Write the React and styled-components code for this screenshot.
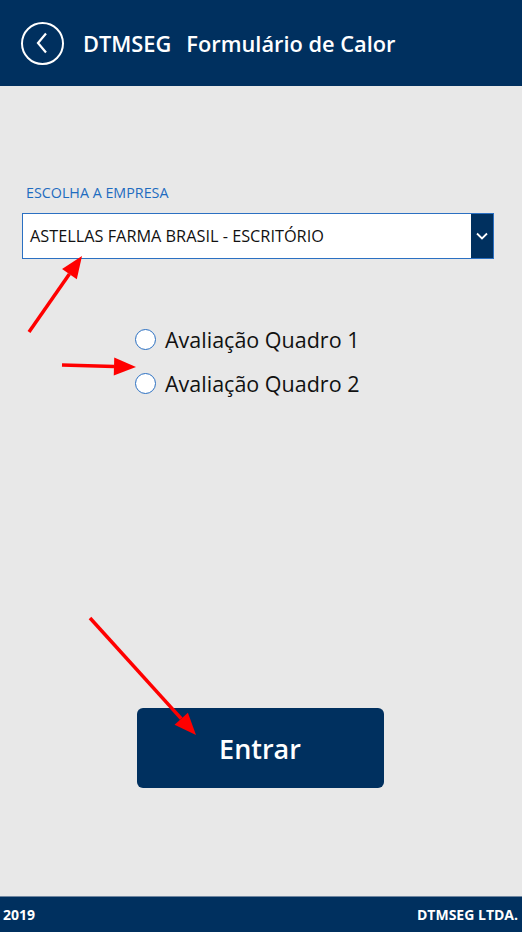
import React from 'react';
import styled, { createGlobalStyle } from 'styled-components';

const Global = createGlobalStyle`
  html, body, #root {
    margin: 0;
    padding: 0;
    height: 100%;
  }
  body {
    font-family: 'Open Sans', 'Noto Sans', sans-serif;
    background: #e8e8e8;
  }
`;

const Page = styled.div`
  position: relative;
  display: flex;
  flex-direction: column;
  min-height: 932px;
  background: #e8e8e8;
`;

const Header = styled.header`
  display: flex;
  align-items: center;
  height: 86px;
  padding-left: 21px;
  background: #00305f;
  color: #fff;
  box-sizing: border-box;
`;

const BackButton = styled.div`
  width: 43px;
  height: 43px;
  border: 2px solid #fff;
  border-radius: 50%;
  box-sizing: border-box;
  display: flex;
  align-items: center;
  justify-content: center;
  margin-right: 19px;
`;

const Title = styled.h1`
  display: flex;
  gap: 15px;
  margin: 0;
  font-size: 21.8px;
  font-weight: 600;
`;

const Main = styled.main`
  flex: 1;
  display: flex;
  flex-direction: column;
  padding: 99px 28px 0 22px;
`;

const Label = styled.div`
  font-size: 14.3px;
  line-height: 16px;
  color: #1e6cc0;
  padding-left: 4px;
  margin-bottom: 12px;
`;

const Select = styled.div`
  display: flex;
  height: 46px;
  border: 1px solid #2b70c2;
  background: #fff;
  box-sizing: border-box;
`;

const SelectValue = styled.div`
  flex: 1;
  display: flex;
  align-items: center;
  padding-left: 7px;
  font-size: 16.3px;
  color: #111;
`;

const SelectButton = styled.div`
  width: 22px;
  background: #00305f;
  display: flex;
  align-items: center;
  justify-content: center;
`;

const RadioGroup = styled.div`
  display: flex;
  flex-direction: column;
  margin: 58px 0 0 113px;
`;

const RadioRow = styled.label`
  display: flex;
  align-items: center;
  height: 44px;
  font-size: 21.5px;
  color: #111;
`;

const RadioDot = styled.span`
  width: 21px;
  height: 21px;
  border: 1.5px solid #2b70c2;
  border-radius: 50%;
  background: #fff;
  box-sizing: border-box;
  margin-right: 9px;
`;

const Button = styled.button`
  align-self: center;
  width: 247px;
  height: 80px;
  margin: 303px 0 0 4px;
  border: none;
  border-radius: 6px;
  background: #00305f;
  color: #fff;
  font-family: inherit;
  font-size: 27px;
  font-weight: 600;
`;

const Footer = styled.footer`
  display: flex;
  justify-content: space-between;
  align-items: center;
  height: 35px;
  margin-top: auto;
  padding: 0 4px 0 3px;
  background: #00305f;
  color: #fff;
  font-size: 14px;
  font-weight: 700;
  border-top: 1px solid #6f86a0;
`;

const Annotations = styled.svg`
  position: absolute;
  left: 0;
  top: 0;
  width: 522px;
  height: 932px;
  pointer-events: none;
`;

const Arrow = ({ x1, y1, x2, y2 }) => {
  const a = Math.atan2(y2 - y1, x2 - x1);
  const len = 22;
  const w = 9;
  const bx = x2 - len * Math.cos(a);
  const by = y2 - len * Math.sin(a);
  const px = -Math.sin(a) * w;
  const py = Math.cos(a) * w;
  return (
    <g>
      <line x1={x1} y1={y1} x2={bx} y2={by} stroke="#ff0000" strokeWidth="3.5" />
      <polygon
        points={`${x2},${y2} ${bx + px},${by + py} ${bx - px},${by - py}`}
        fill="#ff0000"
      />
    </g>
  );
};

export default function App() {
  return (
    <Page>
      <Global />
      <Header>
        <BackButton>
          <svg width="20" height="24" viewBox="0 0 20 24">
            <path d="M13 2.5 L5 12 L13 21.5" fill="none" stroke="#fff" strokeWidth="2.2" />
          </svg>
        </BackButton>
        <Title>
          <span>DTMSEG</span>
          <span>Formulário de Calor</span>
        </Title>
      </Header>
      <Main>
        <Label>ESCOLHA A EMPRESA</Label>
        <Select>
          <SelectValue>ASTELLAS FARMA BRASIL - ESCRITÓRIO</SelectValue>
          <SelectButton>
            <svg width="14" height="10" viewBox="0 0 14 10">
              <path d="M2 2.5 L7 7.5 L12 2.5" fill="none" stroke="#fff" strokeWidth="1.8" />
            </svg>
          </SelectButton>
        </Select>
        <RadioGroup>
          <RadioRow>
            <RadioDot />
            Avaliação Quadro 1
          </RadioRow>
          <RadioRow>
            <RadioDot />
            Avaliação Quadro 2
          </RadioRow>
        </RadioGroup>
        <Button>Entrar</Button>
      </Main>
      <Footer>
        <span>2019</span>
        <span>DTMSEG LTDA.</span>
      </Footer>
      <Annotations viewBox="0 0 522 932">
        <Arrow x1={29} y1={332} x2={82} y2={256} />
        <Arrow x1={62} y1={365} x2={136} y2={367} />
        <Arrow x1={90} y1={618} x2={196} y2={735} />
      </Annotations>
    </Page>
  );
}
